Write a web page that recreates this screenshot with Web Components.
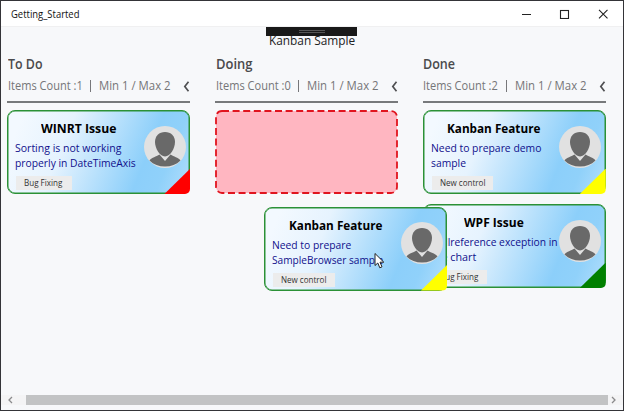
<!DOCTYPE html>
<html lang="en"><head><meta charset="utf-8"><title>Getting_Started</title>
<style>html,body{margin:0;height:100%;overflow:hidden}body{font-family:"Open Sans","Noto Sans",sans-serif}</style></head>
<body><kanban-window></kanban-window>
<script>
// One line of text, condensed or widened to the width given in "w".
class FitText extends HTMLElement{
  connectedCallback(){
    const w=+this.getAttribute('w');
    this.attachShadow({mode:'open'}).innerHTML=`<style>:host{display:block;width:${w}px;white-space:nowrap}span{display:inline-block;transform-origin:0 50%}</style><span><slot></slot></span>`;
    const s=this.shadowRoot.querySelector('span');
    s.style.transform=`scaleX(${w/s.offsetWidth})`;
  }
}
customElements.define('fit-text',FitText);

class UserAvatar extends HTMLElement{
  constructor(){super();this.attachShadow({mode:'open'}).innerHTML=`<style>:host{display:block;width:42px;height:42px}svg{display:block}</style>
  <svg width="42" height="42" viewBox="0 0 42 42"><circle cx="21" cy="21" r="21" fill="#e1e1e1"/>
  <path d="M5.500 34.500C8 31 12 31 15.500 28.500L21 35L26.500 28.500C30 31 34 31 36.500 34.500C32.500 38.500 27 40.500 21 40.500C15 40.500 9.500 38.500 5.500 34.500Z" fill="#696969"/>
  <path d="M21 6C27 6 31 10 31 16C31 22 26.500 30.500 21 30.500C15.500 30.500 11 22 11 16C11 10 15 6 21 6Z" fill="#696969"/></svg>`}
}
customElements.define('user-avatar',UserAvatar);

class KanbanCard extends HTMLElement{
  connectedCallback(){
    const a=n=>this.getAttribute(n);
    this.attachShadow({mode:'open'}).innerHTML=`<style>
    :host{display:block;flex:none;position:relative;box-sizing:border-box;width:183px;height:84px;border:1px solid #2b9136;box-shadow:inset 0 0 0 .5px #2b9136;border-radius:8px;background:linear-gradient(112deg,#f3f9ff 8%,#e6f3fe 32%,#8ccffa 73%,#90d1fa 84%,#b4dffc 100%) border-box}
    .body{display:flex;flex-direction:column;height:82px}
    .title{display:flex;justify-content:center;width:140px;height:18px;padding-top:8px;font-size:13px;line-height:18px;font-weight:700;color:#000}
    .desc{padding:3px 0 0 7px;font-size:11.500px;line-height:15px;color:#10108c}
    .tag{display:flex;box-sizing:border-box;margin:6px 0 0 8px;padding-left:8px;height:14px;background:#ececec;width:${a('tagbox')}px;font-size:9px;line-height:14px;color:#333}
    user-avatar{position:absolute;right:3.500px;top:14.500px}
    .corner{position:absolute;right:-1px;bottom:-1px;width:26px;height:25.500px;background:${a('flag')};clip-path:polygon(100% 0,100% 100%,0 100%);border-bottom-right-radius:5px}
    </style><div class="body"><div class="title"><fit-text w="${a('tw')}">${a('name')}</fit-text></div>
    <div class="desc"><slot></slot></div><div class="tag"><fit-text w="${a('tagw')}">${a('tag')}</fit-text></div></div>
    <user-avatar></user-avatar><div class="corner"></div>`;
  }
}
customElements.define('kanban-card',KanbanCard);

class DropPlaceholder extends HTMLElement{
  constructor(){super();this.attachShadow({mode:'open'}).innerHTML=`<style>:host{display:block;width:183px;height:84px}svg{display:block}</style>
  <svg width="183" height="84"><rect x="1" y="1" width="181" height="82" rx="6" fill="#ffb6c1" stroke="#e0141e" stroke-width="1.800" stroke-dasharray="7 3.600"/></svg>`}
}
customElements.define('drop-placeholder',DropPlaceholder);

class KanbanColumn extends HTMLElement{
  connectedCallback(){
    const a=n=>this.getAttribute(n);
    this.attachShadow({mode:'open'}).innerHTML=`<style>
    :host{display:block;width:183px}
    .head{box-sizing:border-box;height:49px;padding-left:.5px;border-bottom:2px solid #77797b}
    .name{height:20px;font-size:13.500px;line-height:20px;font-weight:600;color:#4a4a4c}
    .info{display:flex;align-items:center;height:24px;font-size:12px;line-height:24px;color:#757577}
    .bar{width:1px;height:12px;background:#77777a;margin:0 8px 0 8px}
    svg{margin-left:auto}
    .cards{display:flex;flex-direction:column;gap:10px;padding-top:7px}
    </style><div class="head"><div class="name"><fit-text w="${a('nw')}">${a('name')}</fit-text></div>
    <div class="info"><fit-text w="74.500">Items Count :${a('count')}</fit-text><i class="bar"></i><fit-text w="72">Min 1 / Max 2</fit-text>
    <svg width="7" height="11" viewBox="0 0 7 11"><path d="M5.500 .8L1.800 5.500L5.500 10.200" fill="none" stroke="#505052" stroke-width="1.700"/></svg></div></div>
    <div class="cards"><slot></slot></div>`;
  }
}
customElements.define('kanban-column',KanbanColumn);

class KanbanWindow extends HTMLElement{
  constructor(){super();this.attachShadow({mode:'open'}).innerHTML=`<style>
  :host{display:flex;flex-direction:column;position:relative;box-sizing:border-box;width:624px;height:411px;background:#f7f8fa;border:1px solid #343438;overflow:hidden}
  .titlebar{display:flex;align-items:center;box-sizing:border-box;height:26px;padding:0 15px 0 10px;background:#fff;font-size:10px;line-height:24px;color:#111;border-bottom:1px solid #f0f0f1;flex:none}
  .titlebar svg{margin-left:auto}
  .caption{display:flex;justify-content:center;height:27px;font-size:12.800px;line-height:27px;color:#222;flex:none}
  .board{display:flex;gap:24.700px;padding-left:6.400px;flex:1}
  .scroll{display:flex;align-items:center;height:10px;margin-bottom:5px;padding:0 4px 0 6px;background:#f4f4f5;flex:none}
  .thumb{width:582px;height:10px;background:#c2c3c4;margin:0 2px 0 12px}
  .handle{position:absolute;left:265.400px;top:26px;width:91px;height:9px;background:#191919;display:grid;place-items:center}
  .handle i{box-sizing:border-box;width:26px;height:3px;border:1px solid #555;border-width:1px 0}
  .dragged{position:absolute;left:263px;top:205.500px}
  .cursor{position:absolute;left:373px;top:251px}
  </style>
  <div class="titlebar"><fit-text w="68">Getting_Started</fit-text>
   <svg width="87" height="10" viewBox="0 0 87 10" fill="none" stroke="#222" stroke-width="1.100"><path d="M1 5.500H10M78 .8L86.500 9.300M86.500 .8L78 9.300"/><rect x="39.500" y="1.500" width="8" height="8"/></svg></div>
  <div class="caption"><fit-text w="86">Kanban Sample</fit-text></div>
  <div class="board">
   <kanban-column name="To Do" nw="35" count="1"><kanban-card name="WINRT Issue" tw="75" tag="Bug Fixing" tagw="38.500" tagbox="55.500" flag="#f00"><fit-text w="106">Sorting is not working</fit-text><fit-text w="121">properly in DateTimeAxis</fit-text></kanban-card></kanban-column>
   <kanban-column name="Doing" nw="36.500" count="0"><drop-placeholder></drop-placeholder></kanban-column>
   <kanban-column name="Done" nw="32.500" count="2"><kanban-card name="Kanban Feature" tw="93" tag="New control" tagw="45.500" tagbox="61.500" flag="#ff0"><fit-text w="110">Need to prepare demo</fit-text><fit-text w="35">sample</fit-text></kanban-card>
    <kanban-card name="WPF Issue" tw="60" tag="Bug Fixing" tagw="38.500" tagbox="55.500" flag="#008000"><fit-text w="127">Nullreference exception in</fit-text><fit-text w="45">the chart</fit-text></kanban-card></kanban-column>
  </div>
  <div class="scroll"><svg width="7" height="8" viewBox="0 0 7 8"><path d="M5 1L2 4L5 7" fill="none" stroke="#8a8a8c" stroke-width="1.300"/></svg><div class="thumb"></div><svg width="7" height="8" viewBox="0 0 7 8"><path d="M2 1L5 4L2 7" fill="none" stroke="#8a8a8c" stroke-width="1.300"/></svg></div>
  <div class="handle"><i></i></div>
  <kanban-card class="dragged" name="Kanban Feature" tw="93" tag="New control" tagw="45.500" tagbox="61.500" flag="#ff0"><fit-text w="79">Need to prepare</fit-text><fit-text w="111">SampleBrowser sample</fit-text></kanban-card>
  <svg class="cursor" width="12" height="18" viewBox="0 0 12 18"><path d="M1 1.500V13.500L3.800 11L5.800 15.800L8 14.800L6 10.200H9.800Z" fill="#fff" stroke="#222" stroke-width="1"/></svg>`}
}
customElements.define('kanban-window',KanbanWindow);
</script></body></html>
